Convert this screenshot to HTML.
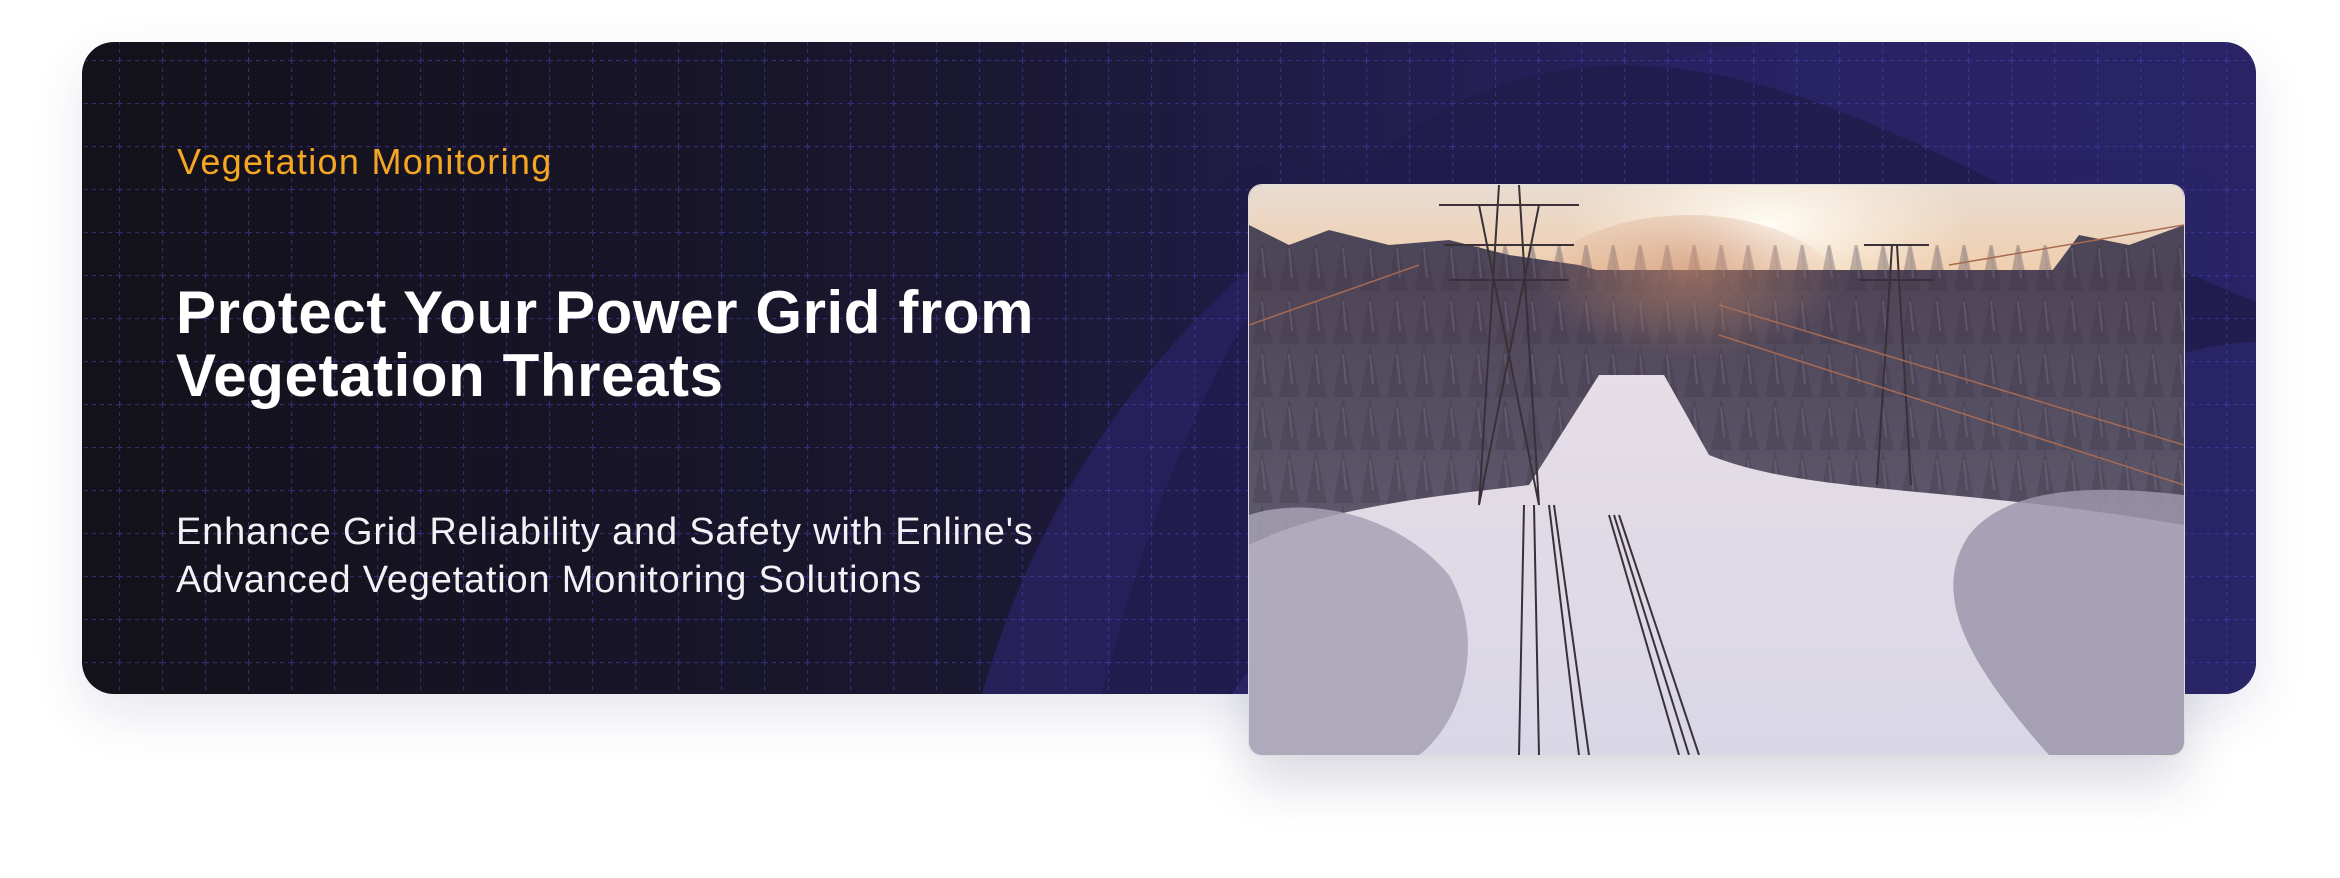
<!DOCTYPE html>
<html><head><meta charset="utf-8"><style>
html,body{margin:0;padding:0;background:#fff;width:2340px;height:878px;overflow:hidden;font-family:"Liberation Sans",sans-serif}
.card{position:absolute;left:82px;top:42px;width:2174px;height:652px;border-radius:32px;overflow:hidden;
background:linear-gradient(90deg,#131119 0%,#1a1730 40%,#241f55 65%,#2c2668 100%);box-shadow:0 20px 50px rgba(60,60,120,0.12)}
.blob{position:absolute;left:0;top:0}
.label{position:absolute;left:177px;top:141px;color:#f5a623;font-size:36px;letter-spacing:1.3px}
.h{position:absolute;left:176px;top:281px;color:#fff;font-weight:bold;font-size:60px;line-height:63px;letter-spacing:0.6px}
.sub{position:absolute;left:176px;top:508px;color:#f2f2f6;font-size:38px;line-height:48px;letter-spacing:0.8px}
.photo{position:absolute;left:1248px;top:184px;width:935px;height:570px;border-radius:14px;overflow:hidden;box-shadow:0 25px 50px rgba(40,40,90,0.18);border:1px solid #ddd}
</style></head><body>
<div class="card">
<svg class="blob" width="2174" height="652">
<defs>
<pattern id="g" width="43" height="43" patternUnits="userSpaceOnUse" x="-6" y="18">
<path d="M0 0.5 H43 M0.5 0 V43" stroke="#4a3fb0" stroke-opacity=".55" stroke-width="1.3" stroke-dasharray="4 4" fill="none"/>
</pattern>
</defs>
<path d="M900 652 C1000 300 1300 40 1700 0 L2174 0 L2174 652 Z" fill="#2a2466" opacity=".7"/>
<path d="M1020 652 C1080 420 1200 80 1470 30 C1700 -10 1900 150 2174 260 L2174 652 Z" fill="#1f1b4a" opacity=".8"/>
<path d="M1150 652 C1250 500 1500 420 1800 380 C2000 350 2100 300 2174 300 L2174 652 Z" fill="#2f2a72" opacity=".7"/>
<rect width="2174" height="652" fill="url(#g)"/>
</svg>
</div>
<div class="label">Vegetation Monitoring</div>
<div class="h">Protect Your Power Grid from<br>Vegetation Threats</div>
<div class="sub">Enhance Grid Reliability and Safety with Enline's<br>Advanced Vegetation Monitoring Solutions</div>
<div class="photo">
<svg width="935" height="570" viewBox="0 0 935 570">
<defs>
<linearGradient id="sky" x1="0" y1="0" x2="0" y2="1"><stop offset="0" stop-color="#e9dcd2"/><stop offset="1" stop-color="#f2c9a0"/></linearGradient>
<radialGradient id="sun" cx="0.5" cy="0.5" r="0.5"><stop offset="0" stop-color="#fffdf5"/><stop offset="1" stop-color="#fff3e0" stop-opacity="0"/></radialGradient>
<linearGradient id="for" x1="0" y1="0" x2="0" y2="1"><stop offset="0" stop-color="#4e4456"/><stop offset="1" stop-color="#5e5a6e"/></linearGradient>
<linearGradient id="snow" x1="0" y1="0" x2="0" y2="1"><stop offset="0" stop-color="#e6dde6"/><stop offset="1" stop-color="#d9d7e6"/></linearGradient>
<radialGradient id="glow" cx="0.5" cy="0.3" r="0.5"><stop offset="0" stop-color="#c98a6a" stop-opacity=".6"/><stop offset="1" stop-color="#c98a6a" stop-opacity="0"/></radialGradient>
<pattern id="tr" width="27" height="53" patternUnits="userSpaceOnUse"><path d="M13 0 L24 53 L3 53 Z" fill="#3d3546" opacity=".3"/><path d="M13 10 L16 40" stroke="#8a8498" stroke-width="2" opacity=".3"/></pattern>
</defs>
<rect width="935" height="120" fill="url(#sky)"/>
<ellipse cx="520" cy="40" rx="200" ry="90" fill="url(#sun)"/>
<path d="M0 40 L40 60 L80 45 L140 60 L200 55 L260 70 L330 80 L400 100 L935 100 L935 40 L880 60 L830 50 L800 90 L0 90 Z" fill="#4d4658"/>
<rect x="0" y="85" width="935" height="280" fill="url(#for)"/>
<rect x="0" y="60" width="935" height="310" fill="url(#tr)"/>
<ellipse cx="440" cy="120" rx="160" ry="90" fill="url(#glow)"/>
<path d="M0 360 C80 320 200 310 280 300 L350 190 L415 190 L460 270 C560 310 700 300 935 340 L935 570 L0 570 Z" fill="url(#snow)"/>
<path d="M0 330 C60 310 150 330 200 390 C240 460 210 540 170 570 L0 570 Z" fill="#a7a1b4" opacity=".85"/>
<path d="M935 310 C850 300 760 300 720 350 C680 410 720 480 800 570 L935 570 Z" fill="#9c97ac" opacity=".85"/>
<g stroke="#3a3038" stroke-width="2" fill="none">
<path d="M230 320 L250 0 M290 320 L270 0 M190 20 L330 20 M195 60 L325 60 M200 95 L320 95 M230 320 L290 20 M290 320 L230 20"/>
<path d="M628 300 L643 60 M662 300 L648 60 M615 60 L680 60 M610 95 L685 95"/>
<path d="M270 570 L275 320 M290 570 L285 320 M330 570 L300 320 M340 570 L305 320 M430 570 L360 330 M440 570 L365 330 M450 570 L370 330"/>
</g>
<g stroke="#a86a52" stroke-width="1.5" fill="none"><path d="M0 140 L170 80 M470 120 L935 260 M470 150 L935 300 M700 80 L935 40"/></g>
</svg>
</div>
</body></html>
